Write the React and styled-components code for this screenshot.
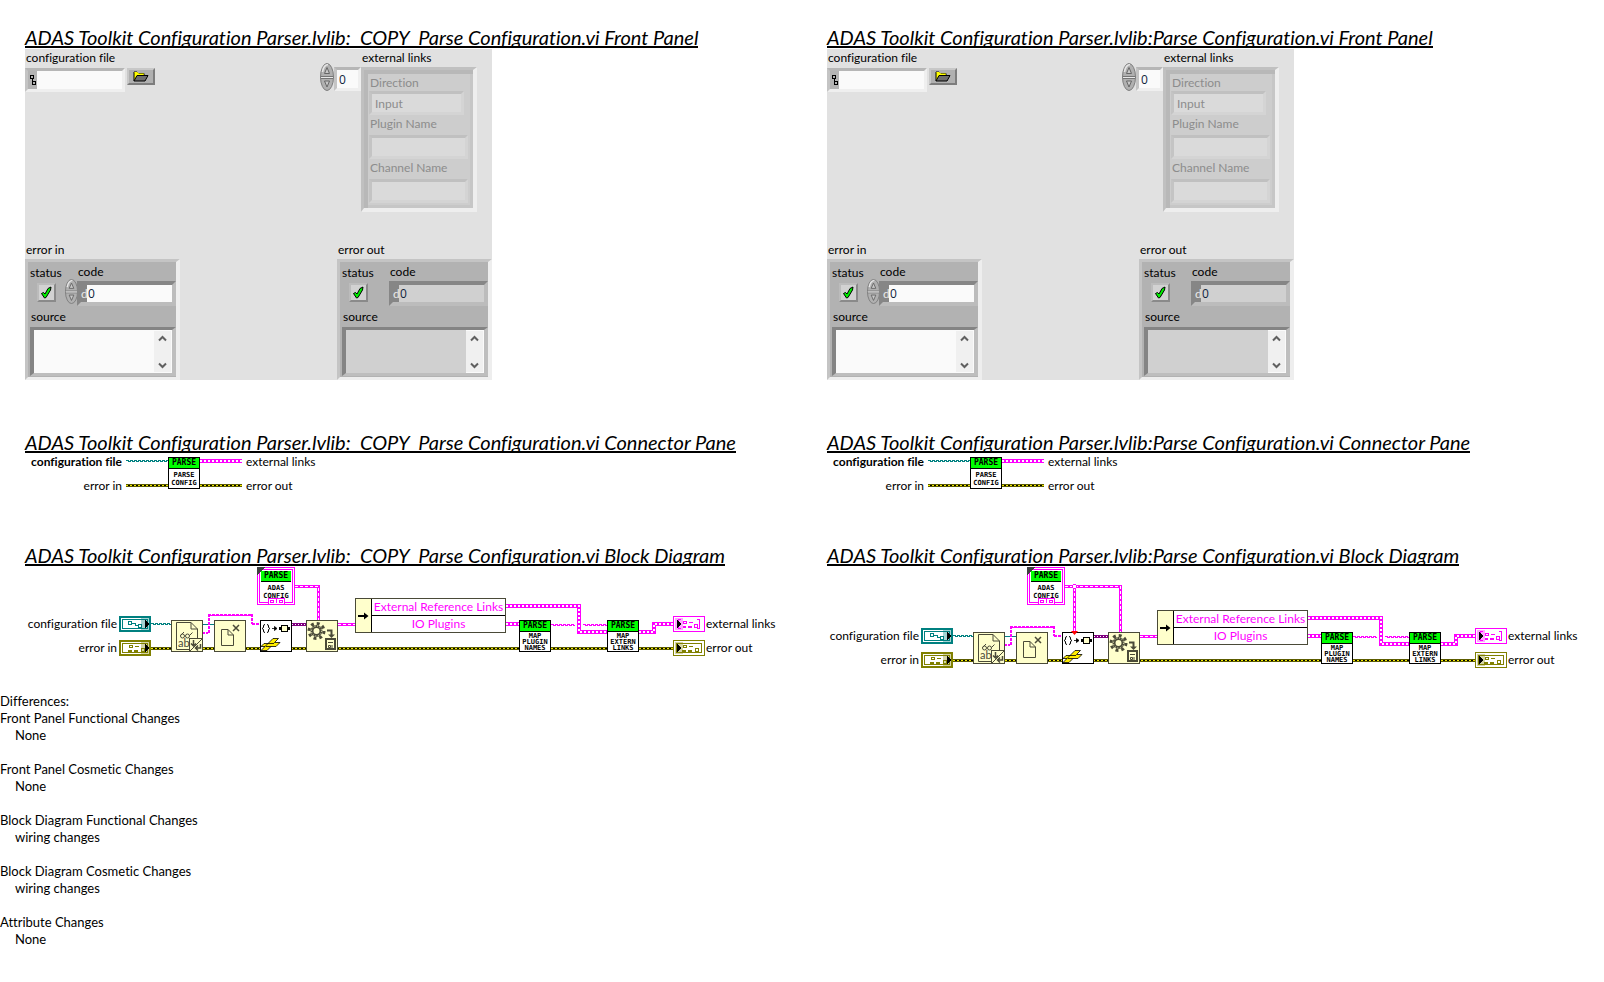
import React, { useId } from "react";
import styled, { createGlobalStyle, css } from "styled-components";

const GlobalStyle = createGlobalStyle`
  *, *::before, *::after { box-sizing: border-box; }
  body {
    margin: 0;
    background: #fff;
    color: #000;
    font: 400 12px/18px Lato, "Open Sans", sans-serif;
    font-variant-ligatures: none;
  }
  input, textarea, button { font: inherit; color: inherit; margin: 0; padding: 0; border-radius: 0; }
`;

const PINK = "#ff00ff";
const TEAL = "#008080";
const OLIVE = "#808000";
const CREAM = "#ffffcc";
const INK = "#4a4a38";

/* ---------- page ---------- */

const Columns = styled.main`
  display: grid;
  grid-template-columns: 1fr 1fr;
  padding-top: 26px;
`;

const Column = styled.div`
  min-width: 0;
  padding-left: 25px;
`;

const Section = styled.section`
  margin-bottom: ${(p) => p.$after}px;
`;

const Heading = styled.h2`
  width: fit-content;
  height: 22px;
  margin: 0 0 ${(p) => p.$gap}px;
  border-bottom: 2px solid #000;
  font-size: 20px;
  font-style: italic;
  font-weight: 400;
  line-height: 22px;
  white-space: pre;
`;

/* ---------- front panel ---------- */

const Panel = styled.div`
  display: flex;
  flex-direction: column;
  justify-content: space-between;
  width: 467px;
  height: 331px;
  background: #e1e1e1;
`;

const TopRow = styled.div`
  display: flex;
  align-items: flex-start;
`;

const BottomRow = styled.div`
  display: flex;
  justify-content: space-between;
`;

const Caption = styled.label`
  display: block;
  padding-left: ${(p) => p.$indent || 1}px;
  color: ${(p) => (p.$dim ? "#8c8c8c" : "#000")};
  line-height: 18px;
  white-space: nowrap;
`;

const PathGroup = styled.div`
  width: 295px;
`;

const PathRow = styled.div`
  display: flex;
  align-items: flex-start;
  gap: 2px;
  padding-top: 1px;
`;

const bevel = css`
  border-style: solid;
  border-width: 3px;
  border-color: #b6b6b6 #efefef #efefef #c4c4c4;
`;

const numerals = css`
  font-family: "Open Sans", sans-serif;
  font-size: 12px;
  color: #10243c;
`;

const PathBox = styled.div`
  ${bevel}
  display: flex;
  width: 100px;
  height: 24px;
  background: #fafafa;
  svg { flex: none; background: #b4b4b4; }
  input { flex: 1; min-width: 0; border: 0; background: transparent; outline: 0; }
`;

const BrowseButton = styled.button`
  display: grid;
  place-items: center;
  width: 28px;
  height: 17px;
  border: 2px solid;
  border-color: #c8c8c8 #7d7d7d #7d7d7d #c8c8c8;
  background: #b0b0b0;
`;

const IndexControl = styled.div`
  display: flex;
  align-items: flex-end;
  width: 41px;
  height: 42px;
  padding-top: 14px;
`;

const IndexInput = styled.input`
  ${bevel}
  width: 27px;
  height: 24px;
  background: #fafafa;
  outline: 0;
  && { ${numerals} padding-left: 2px; }
`;

const LinksCluster = styled.div`
  width: 116px;
  height: 145px;
  padding: 4px 5px 0 0;
  border: solid;
  border-width: 3px 4px 4px 3px;
  border-color: #c0c0c0 #eeeeee #eeeeee #c0c0c0;
  background: #cdcdcd;
  box-shadow: inset 4px 4px 0 #b8b8b8, inset -3px -3px 0 #c6c6c6;
`;

const LinksFields = styled.div`
  display: grid;
  grid-template-rows: 17px 24px 20px 24px 20px 24px;
  padding-left: 5px;
`;

const DimInput = styled.input`
  width: ${(p) => p.$w}px;
  height: 24px;
  border: 3px solid;
  border-color: #c0c0c0 #d4d4d4 #d4d4d4 #c4c4c4;
  background: #dadada;
  outline: 0;
  && { padding-left: 3px; }
  &&:disabled { color: #8c8c8c; }
`;

const ErrorCluster = styled.div`
  width: 155px;
  height: 121px;
  padding-top: 1px;
  border: solid;
  border-width: 3px 4px 3px 3px;
  border-color: #c4c4c4 #eeeeee #eeeeee #c4c4c4;
  background: #b2b2b2;
`;

const ErrorRow = styled.div`
  display: flex;
  height: 45px;
`;

const StatusField = styled.div`
  width: 37px;
  padding-top: 1px;
`;

const StatusBox = styled.span`
  display: block;
  position: relative;
  width: 19px;
  height: 19px;
  margin-left: 9px;
  margin-top: 1px;
  input {
    appearance: none;
    display: block;
    width: 19px;
    height: 19px;
    border: 2px solid;
    border-color: #bcbcbc #8a8a8a #8a8a8a #bcbcbc;
    background: #d2d2d2;
  }
  svg { position: absolute; inset: 3px; pointer-events: none; }
`;

const SpinnerSlot = styled.div`
  flex: none;
  width: 12px;
  padding-top: 16px;
`;

const Numeric = styled.div`
  display: flex;
  width: 99px;
  height: 25px;
  border: 4px solid;
  border-color: #868686 #bcbcbc #bcbcbc #868686;
  background: ${(p) => (p.$readOnly ? "#d0d0d0" : "#fafafa")};
  span { flex: none; width: 6px; overflow: visible; background: #868686; color: #e8e8e8; line-height: 17px; text-align: right; }
  input { ${numerals} flex: 1; min-width: 0; border: 0; padding-left: 1px; background: transparent; outline: 0; }
`;

const SourceBox = styled.div`
  display: flex;
  width: 146px;
  height: 49px;
  margin: 1px 0 0 2px;
  border: solid;
  border-width: 3px 4px;
  border-color: #848484 #bebebe #bebebe #848484;
  background: ${(p) => (p.$readOnly ? "#d0d0d0" : "#fafafa")};
  textarea { flex: 1; min-width: 0; border: 0; resize: none; overflow: hidden; background: transparent; outline: 0; }
`;

const ScrollTrack = styled.div`
  display: flex;
  flex-direction: column;
  justify-content: space-between;
  width: 18px;
  border: solid #fafafa;
  border-width: 1px 1px 1px 0;
  background: #f0f0f0;
  button { display: grid; place-items: center; width: 16px; height: 14px; border: 0; background: transparent; }
`;

function Spinner({ w, h }) {
  return (
    <svg width={w} height={h} viewBox="0 0 14 28" preserveAspectRatio="none" aria-hidden="true">
      <ellipse cx="7" cy="14" rx="6.5" ry="13.5" fill="#b0b0b0" stroke="#7c7c7c" />
      <path d="M2.500 9Q3.500 2 8 1.500" stroke="#e6e6e6" strokeWidth="1.500" fill="none" />
      <path d="M1 13.500H13M1 15.500H13" stroke="#757575" />
      <path d="M1 14.500H13" stroke="#e8e8e8" />
      <path d="M4.500 10.500L7 4.500L9.500 10.500Z" fill="#c8c8c8" stroke="#666" />
      <path d="M4.500 18L7 24L9.500 18Z" fill="#c8c8c8" stroke="#666" />
    </svg>
  );
}

function Chevron({ down }) {
  return (
    <svg width="9" height="7" viewBox="0 0 9 7" aria-hidden="true">
      <path d={down ? "M1 1.500L4.500 5L8 1.500" : "M1 5.500L4.500 2L8 5.500"} fill="none" stroke="#606060" strokeWidth="2" />
    </svg>
  );
}

function ErrorGroup({ title, readOnly }) {
  const id = useId();
  return (
    <div role="group" aria-label={title}>
      <Caption as="div">{title}</Caption>
      <ErrorCluster>
        <ErrorRow>
          <StatusField>
            <Caption htmlFor={id + "s"} $indent={2}>status</Caption>
            <StatusBox>
              <input id={id + "s"} type="checkbox" defaultChecked disabled={readOnly} />
              <svg width="13" height="13" viewBox="0 0 13 13" aria-hidden="true">
                <path d="M1.500 7.500L3.500 6.500L5 8L8 2.500L11 1L10.500 4L6 11.500L4.500 12Z" fill="#00f000" stroke="#000" />
              </svg>
            </StatusBox>
          </StatusField>
          <SpinnerSlot>{!readOnly && <Spinner w={13} h={25} />}</SpinnerSlot>
          <div>
            <Caption htmlFor={id + "c"}>code</Caption>
            <Numeric $readOnly={readOnly}>
              <span aria-hidden="true">d</span>
              <input id={id + "c"} defaultValue="0" readOnly={readOnly} />
            </Numeric>
          </div>
        </ErrorRow>
        <Caption htmlFor={id + "t"} $indent={3}>source</Caption>
        <SourceBox $readOnly={readOnly}>
          <textarea id={id + "t"} readOnly={readOnly} />
          <ScrollTrack>
            <button type="button" aria-label="Scroll up"><Chevron /></button>
            <button type="button" aria-label="Scroll down"><Chevron down /></button>
          </ScrollTrack>
        </SourceBox>
      </ErrorCluster>
    </div>
  );
}

function FrontPanel() {
  const id = useId();
  return (
    <Panel>
      <TopRow>
        <PathGroup>
          <Caption htmlFor={id + "p"}>configuration file</Caption>
          <PathRow>
            <PathBox>
              <svg width="9" height="18" viewBox="0 0 9 18" shapeRendering="crispEdges" aria-hidden="true">
                <path d="M2.500 4.500H5.500V7.500H2.500ZM4.500 10.500H7.500V13.500H4.500ZM4.500 7.500V11.500" fill="none" stroke="#000" />
              </svg>
              <input id={id + "p"} />
            </PathBox>
            <BrowseButton type="button" aria-label="Browse">
              <svg width="16" height="11" viewBox="0 0 16 11" aria-hidden="true">
                <path d="M1 10V1H4L5.500 2.500H11V5" fill="#ffff00" stroke="#000" />
                <path d="M1 10L4 4.500H15L12 10Z" fill="#6c6c6c" stroke="#000" />
                <path d="M1.500 1.500H4.500L5.500 3H11" stroke="#ffff00" fill="none" />
              </svg>
            </BrowseButton>
          </PathRow>
        </PathGroup>
        <IndexControl>
          <Spinner w={14} h={28} />
          <IndexInput aria-label="external links index" defaultValue="0" />
        </IndexControl>
        <div role="group" aria-label="external links">
          <Caption as="div">external links</Caption>
          <LinksCluster>
            <LinksFields>
              <Caption $dim htmlFor={id + "d"}>Direction</Caption>
              <DimInput $w={95} id={id + "d"} defaultValue="Input" disabled />
              <Caption $dim htmlFor={id + "n"}>Plugin Name</Caption>
              <DimInput $w={99} id={id + "n"} disabled />
              <Caption $dim htmlFor={id + "c"}>Channel Name</Caption>
              <DimInput $w={99} id={id + "c"} disabled />
            </LinksFields>
          </LinksCluster>
        </div>
      </TopRow>
      <BottomRow>
        <ErrorGroup title="error in" />
        <ErrorGroup title="error out" readOnly />
      </BottomRow>
    </Panel>
  );
}

/* ---------- VI icons ---------- */

const ViIcon = styled.div`
  width: 32px;
  height: 32px;
  border: 1px solid #000;
  background: #fff;
  font-family: "DejaVu Sans Mono", monospace;
  font-size: 7px;
  font-weight: 700;
  text-align: center;
  white-space: nowrap;
`;

const ViBanner = styled.div`
  height: 11px;
  border-bottom: 1px solid #000;
  background: #00ff00;
  font-size: 8px;
  line-height: 10px;
`;

const ViText = styled.div`
  padding-top: ${(p) => p.$top}px;
  line-height: ${(p) => p.$line}px;
`;

function SubVi({ lines }) {
  const three = lines.length > 2;
  return (
    <ViIcon>
      <ViBanner>PARSE</ViBanner>
      <ViText $top={three ? 1 : 2} $line={three ? 6 : 8}>
        {lines.map((l) => <div key={l}>{l}</div>)}
      </ViText>
    </ViIcon>
  );
}

/* ---------- wires ---------- */

function wavePath(x1, x2, y) {
  let d = `M${x1} ${y}`;
  for (let x = x1, up = true; x < x2; x += 2, up = !up) d += `H${Math.min(x + 2, x2)}${x + 2 < x2 ? (up ? "v1" : "v-1") : ""}`;
  return d;
}

function Wave({ x1, x2, y, color }) {
  return <path d={wavePath(x1, x2, y + 0.5)} fill="none" stroke={color} />;
}

function ErrorWire({ x1, x2, y }) {
  return (
    <g>
      <path d={`M${x1} ${y}H${x2}`} stroke="#5c5c00" strokeWidth="3" />
      <path d={`M${x1} ${y}H${x2}`} stroke="#000" strokeWidth="1" />
      <path d={`M${x1} ${y}H${x2}`} stroke="#f0e800" strokeWidth="1" strokeDasharray="2 2" />
    </g>
  );
}

function ClusterWire({ d, wide }) {
  return (
    <g fill="none">
      <path d={d} stroke={PINK} strokeWidth={wide ? 4 : 3} />
      <path d={d} stroke="#fff" strokeWidth={wide ? 2 : 1} strokeDasharray={wide ? "2 2" : "3 2"} />
    </g>
  );
}

/* ---------- connector pane ---------- */

const Pane = styled.div`
  display: grid;
  grid-template-columns: 97px 46px 32px 42px auto;
  grid-template-rows: 9px 9px;
  row-gap: 15px;
  width: fit-content;
  line-height: 9px;
  svg { display: block; }
`;

const PaneLabel = styled.span`
  justify-self: ${(p) => (p.$side === "in" ? "end" : "start")};
  padding-left: ${(p) => (p.$side === "in" ? 0 : 4)}px;
  font-weight: ${(p) => (p.$bold ? 700 : 400)};
  white-space: nowrap;
`;

const PaneIcon = styled.div`
  grid-area: 1 / 3 / 3 / 4;
`;

function PaneWire({ w = 42, children }) {
  return <svg width={w} height="9" viewBox={`0 0 ${w} 9`} shapeRendering="crispEdges" aria-hidden="true">{children}</svg>;
}

function ConnectorPane() {
  return (
    <Pane>
      <PaneLabel $side="in" $bold>configuration file</PaneLabel>
      <PaneWire w={46}><Wave x1={4} x2={46} y={3} color={TEAL} /></PaneWire>
      <PaneIcon><SubVi lines={["PARSE", "CONFIG"]} /></PaneIcon>
      <PaneWire><ClusterWire wide d="M0 4H42" /></PaneWire>
      <PaneLabel>external links</PaneLabel>
      <PaneLabel $side="in">error in</PaneLabel>
      <PaneWire w={46}><ErrorWire x1={4} x2={46} y={4.5} /></PaneWire>
      <PaneWire><ErrorWire x1={0} x2={42} y={4.5} /></PaneWire>
      <PaneLabel>error out</PaneLabel>
    </Pane>
  );
}

/* ---------- block diagram ---------- */

const Canvas = styled.div`
  position: relative;
  height: 102px;
`;

const Wires = styled.svg`
  position: absolute;
  inset: 0 auto auto 0;
  overflow: visible;
`;

const Node = styled.div`
  position: absolute;
  left: ${(p) => p.$x}px;
  top: ${(p) => p.$y}px;
  svg { display: block; }
`;

const TerminalLabel = styled.span`
  position: absolute;
  top: ${(p) => p.$y}px;
  ${(p) => (p.$left ? "left: 681px;" : "left: 0; width: 92px; text-align: right;")}
  line-height: 16px;
  white-space: nowrap;
`;

const ConstantFrame = styled.div`
  position: relative;
  width: 38px;
  height: 38px;
  padding: 1px;
  border: 1px solid ${PINK};
  background: #fff;
  > div { width: 34px; height: 34px; padding: 1px; border: 1px solid ${PINK}; }
  > svg { position: absolute; left: -1px; top: -1px; }
`;

const ConstantIcon = styled(ViIcon)`
  width: 30px;
  height: 30px;
  border: 0;
`;

const Unbundle = styled.div`
  display: grid;
  grid-template-columns: 16px 1fr;
  width: 151px;
  height: 35px;
  border: 1px solid ${INK};
  background: #fff;
  color: ${PINK};
  text-align: center;
`;

const UnbundleGrip = styled.div`
  display: grid;
  grid-row: 1 / 3;
  place-items: center;
  border-right: 1px solid #000;
  background: ${CREAM};
`;

const UnbundleRow = styled.div`
  line-height: 16px;
  white-space: nowrap;
  & + & { border-top: 1px solid #000; }
`;

function Terminal({ color, kind, out }) {
  const arrowX = out ? 4 : 26;
  return (
    <svg width="32" height="16" viewBox="0 0 32 16" shapeRendering="crispEdges" aria-hidden="true">
      <rect width="32" height="16" fill={color} />
      <rect x={out ? 1 : 2} y={out ? 1 : 2} width={out ? 30 : 28} height={out ? 14 : 12} fill="#fff" />
      {kind !== "array" && <rect x="3.500" y="3.500" width="25" height="9" fill="none" stroke={color} />}
      <rect x={out ? 2 : 22} y="2" width="8" height="12" fill={color} opacity="0.350" />
      {kind === "path" && (
        <path d="M9.500 5.500H12.500V8.500H9.500ZM19.500 8.500H22.500V11.500H19.500ZM13 7.500H16V9.500H19" fill="none" stroke={color} />
      )}
      {kind === "error" && (
        <g fill="none" stroke={color}>
          <path d="M10.500 5.500H13.500V7.500H10.500ZM16 6.500H20M22.500 8.500H25.500V11.500H22.500Z" />
          <path d="M9 10.500H13M15 10.500H19" strokeWidth="2" />
        </g>
      )}
      {kind === "array" && (
        <g fill="none" stroke={color}>
          <path d="M8 3.500H5.500V12.500H8M24 3.500H26.500V12.500H24M10.500 5.500H13.500V7.500H10.500ZM16 6.500H20M21.500 8.500H24.500V11.500H21.500Z" />
          <path d="M10 10.500H13M15 10.500H19" strokeWidth="2" />
        </g>
      )}
      <path d={`M${arrowX} 4h1v1h1v1h1v1h1v2h-1v1h-1v1h-1v1h-1Z`} fill="#000" />
    </svg>
  );
}

function Tile({ fill = CREAM, stroke = INK, children }) {
  return (
    <svg width="32" height="32" viewBox="0 0 32 32" aria-hidden="true">
      <rect x="0.500" y="0.500" width="31" height="31" fill={fill} stroke={stroke} shapeRendering="crispEdges" />
      {children}
    </svg>
  );
}

function ReadTextTile() {
  return (
    <Tile>
      <path d="M5.500 2.500H20L26.500 9V29.500H5.500ZM20 2.500V9H26.500" fill="none" stroke={INK} />
      <circle cx="11.500" cy="16" r="2" fill="none" stroke={INK} />
      <circle cx="16.500" cy="16" r="2" fill="none" stroke={INK} />
      <path d="M9.500 15.500L13 12M18.500 15.500L21.500 12.500" fill="none" stroke={INK} />
      <text x="7" y="27" fontSize="11" fill={INK} fontFamily="Lato, sans-serif">ab</text>
      <rect x="18.500" y="18.500" width="13" height="13" fill={CREAM} stroke={INK} />
      <path d="M19 31L31 19" stroke={INK} />
      <path d="M22.500 20V26M20 23.500L22.500 26L25 23.500M29.500 24V28H25M27 25.500L24.500 28L27 30.500" fill="none" stroke={INK} strokeWidth="1.500" />
    </Tile>
  );
}

function NewFileTile() {
  return (
    <Tile>
      <path d="M7.500 9.500H14L19.500 15V25.500H7.500ZM14 9.500V15H19.500" fill="none" stroke={INK} />
      <path d="M19 5L25 11M25 5L19 11" stroke={INK} strokeWidth="1.500" />
    </Tile>
  );
}

function JsonTile() {
  return (
    <Tile fill="#fff" stroke="#000">
      <path d="M5 4.500Q3.500 4.500 3.500 6V7.500L2 8.500L3.500 9.500V11Q3.500 12.500 5 12.500M7 4.500Q8.500 4.500 8.500 6V7.500L10 8.500L8.500 9.500V11Q8.500 12.500 7 12.500" fill="none" stroke="#000" />
      <path d="M12 8.500H16M17 8.500L14.500 6.500V10.500Z" fill="#000" stroke="#000" strokeWidth="0.800" />
      <path d="M19 8.500H30" stroke="#000" strokeWidth="3" />
      <rect x="21.500" y="5.500" width="6" height="6" fill={CREAM} stroke="#000" />
      <path d="M1 30.500L5 26.500H1L4 23.500H8L13 18.500H18.500L14.500 22.500H20L16 26.500H11L7 30.500Z" fill="#ffee00" stroke="#000" strokeWidth="0.800" />
      <path d="M5 26.500L8 23.500H14M11 26.500H6" fill="none" stroke="#000" strokeWidth="0.800" />
    </Tile>
  );
}

function GearTile() {
  return (
    <Tile>
      <g fill="none" stroke={INK}>
        <circle cx="10.500" cy="11" r="7.500" strokeWidth="3" strokeDasharray="2.945 2.945" />
        <circle cx="10.500" cy="11" r="4.500" strokeWidth="3" />
        <circle cx="10.500" cy="11" r="5" stroke={CREAM} strokeWidth="1" strokeDasharray="1 1.620" />
        <path d="M21 10.500H25.500V15" strokeWidth="2" />
      </g>
      <path d="M22 14.500H29L25.500 18Z" fill={INK} />
      <rect x="20" y="19" width="9" height="10" fill={CREAM} stroke={INK} strokeWidth="2" />
      <path d="M22 22.500H27M22.500 25.500H24.500V27.500H22.500ZM26 25V28" fill="none" stroke={INK} />
    </Tile>
  );
}

function ConfigConstant() {
  return (
    <ConstantFrame>
      <div>
        <ConstantIcon>
          <ViBanner>PARSE</ViBanner>
          <ViText $top={2} $line={8}>
            <div>ADAS</div>
            <div>CONFIG</div>
          </ViText>
        </ConstantIcon>
      </div>
      <svg width="38" height="38" viewBox="0 0 38 38" shapeRendering="crispEdges" aria-hidden="true">
        <path d="M0 0H8L0 8Z" fill="#404040" />
        <rect x="11.500" y="31.500" width="16" height="6" fill="#fff" stroke={PINK} />
        <path d="M13.500 33.500H16.500V35.500H13.500ZM19.500 32V36M22.500 33.500H25.500V35.500H22.500Z" fill="none" stroke={PINK} />
      </svg>
    </ConstantFrame>
  );
}

/* shift: how far the main row sits below its base line; branch: the extra
   wire from the configuration constant into the JSON node. */
function BlockDiagram({ shift = 0, branch = false, constantX }) {
  const s = shift;
  return (
    <Canvas>
      <Wires width="680" height="102" shapeRendering="crispEdges" aria-hidden="true">
        <Wave x1={126} x2={146} y={57 + s} color={TEAL} />
        <path d={`M178 ${58.5 + s}H189`} stroke={TEAL} />
        <path d={`M178 ${66.5 + s}H183.500`} stroke={PINK} strokeDasharray="2 1" strokeWidth="2" />
        <path d={`M184 ${67 + s}V${49 + s}`} stroke={PINK} strokeWidth="2" strokeDasharray="3 1" />
        <Wave x1={183} x2={227} y={48 + s} color={PINK} />
        <path d={`M183 ${49 + s}H227`} stroke={PINK} strokeDasharray="2 2" />
        <path d={`M227 ${48 + s}V${58 + s}`} stroke={PINK} strokeWidth="2" strokeDasharray="3 1" />
        <path d={`M227 ${58 + s}H235`} stroke={PINK} strokeWidth="2" strokeDasharray="3 1" />
        <path d={`M267 ${58.5 + s}H281`} stroke="#800080" strokeWidth="3" />
        <path d={`M267 ${58.5 + s}H281`} stroke="#fff" strokeDasharray="1 2" />
        <ClusterWire d={`M313 ${58.5 + s}H330`} />
        <ClusterWire d={`M${constantX + 38} 20.500H293.500V${54 + s}`} />
        {branch && (
          <g>
            <ClusterWire d={`M247.500 22V${54 + s}`} />
            <circle cx="247.500" cy="20.500" r="2" fill="#fff" stroke={PINK} />
          </g>
        )}
        <ClusterWire wide d={`M481 ${40 + s}H554V${66 + s}H582`} />
        <ClusterWire wide d={`M481 ${58 + s}H494`} />
        <Wave x1={526} x2={550} y={58 + s} color={PINK} />
        <Wave x1={558} x2={582} y={58 + s} color={PINK} />
        <ClusterWire wide d={`M614 ${66 + s}H629V${58 + s}H648`} />
        <ErrorWire x1={126} x2={648} y={82.5 + s} />
      </Wires>

      <TerminalLabel $y={50 + s}>configuration file</TerminalLabel>
      <TerminalLabel $y={74 + s}>error in</TerminalLabel>
      <Node $x={94} $y={50 + s}><Terminal color={TEAL} kind="path" /></Node>
      <Node $x={94} $y={74 + s}><Terminal color={OLIVE} kind="error" /></Node>

      <Node $x={constantX} $y={1}><ConfigConstant /></Node>
      <Node $x={146} $y={54 + s}><ReadTextTile /></Node>
      <Node $x={189} $y={54 + s}><NewFileTile /></Node>
      <Node $x={235} $y={54 + s}><JsonTile /></Node>
      <Node $x={281} $y={54 + s}><GearTile /></Node>
      {branch && (
        <Node $x={244} $y={53 + s}>
          <svg width="7" height="4" viewBox="0 0 7 4" aria-hidden="true"><path d="M0 0H7L3.500 4Z" fill="#ff0000" /></svg>
        </Node>
      )}

      <Node $x={330} $y={32 + s}>
        <Unbundle>
          <UnbundleGrip>
            <svg width="11" height="8" viewBox="0 0 11 8" aria-hidden="true">
              <path d="M0 3H6V0.500L10.500 4L6 7.500V5H0Z" fill="#000" />
            </svg>
          </UnbundleGrip>
          <UnbundleRow>External Reference Links</UnbundleRow>
          <UnbundleRow>IO Plugins</UnbundleRow>
        </Unbundle>
      </Node>

      <Node $x={494} $y={54 + s}><SubVi lines={["MAP", "PLUGIN", "NAMES"]} /></Node>
      <Node $x={582} $y={54 + s}><SubVi lines={["MAP", "EXTERN", "LINKS"]} /></Node>
      <Node $x={648} $y={50 + s}><Terminal color={PINK} kind="array" out /></Node>
      <Node $x={648} $y={74 + s}><Terminal color={OLIVE} kind="error" out /></Node>
      <TerminalLabel $left $y={50 + s}>external links</TerminalLabel>
      <TerminalLabel $left $y={74 + s}>error out</TerminalLabel>
    </Canvas>
  );
}

/* ---------- differences ---------- */

const Report = styled.section`
  padding-top: 25px;
  font-size: 13px;
  line-height: 17px;
  p { margin: 0; }
  dl { margin: 0 0 17px; }
  dd { margin: 0 0 0 15px; }
`;

const differences = [
  ["Front Panel Functional Changes", "None"],
  ["Front Panel Cosmetic Changes", "None"],
  ["Block Diagram Functional Changes", "wiring changes"],
  ["Block Diagram Cosmetic Changes", "wiring changes"],
  ["Attribute Changes", "None"],
];

function ViColumn({ name, diagram }) {
  return (
    <Column>
      <Section $after={51}>
        <Heading $gap={1}>{name} Front Panel</Heading>
        <FrontPanel />
      </Section>
      <Section $after={54}>
        <Heading $gap={4}>{name} Connector Pane</Heading>
        <ConnectorPane />
      </Section>
      <Section $after={0}>
        <Heading $gap={0}>{name} Block Diagram</Heading>
        <BlockDiagram {...diagram} />
      </Section>
    </Column>
  );
}

export default function App() {
  return (
    <>
      <GlobalStyle />
      <Columns>
        <ViColumn
          name="ADAS Toolkit Configuration Parser.lvlib:  COPY  Parse Configuration.vi"
          diagram={{ constantX: 232 }}
        />
        <ViColumn
          name="ADAS Toolkit Configuration Parser.lvlib:Parse Configuration.vi"
          diagram={{ constantX: 200, shift: 12, branch: true }}
        />
      </Columns>
      <Report>
        <p>Differences:</p>
        {differences.map(([title, detail]) => (
          <dl key={title}>
            <dt>{title}</dt>
            <dd>{detail}</dd>
          </dl>
        ))}
      </Report>
    </>
  );
}
